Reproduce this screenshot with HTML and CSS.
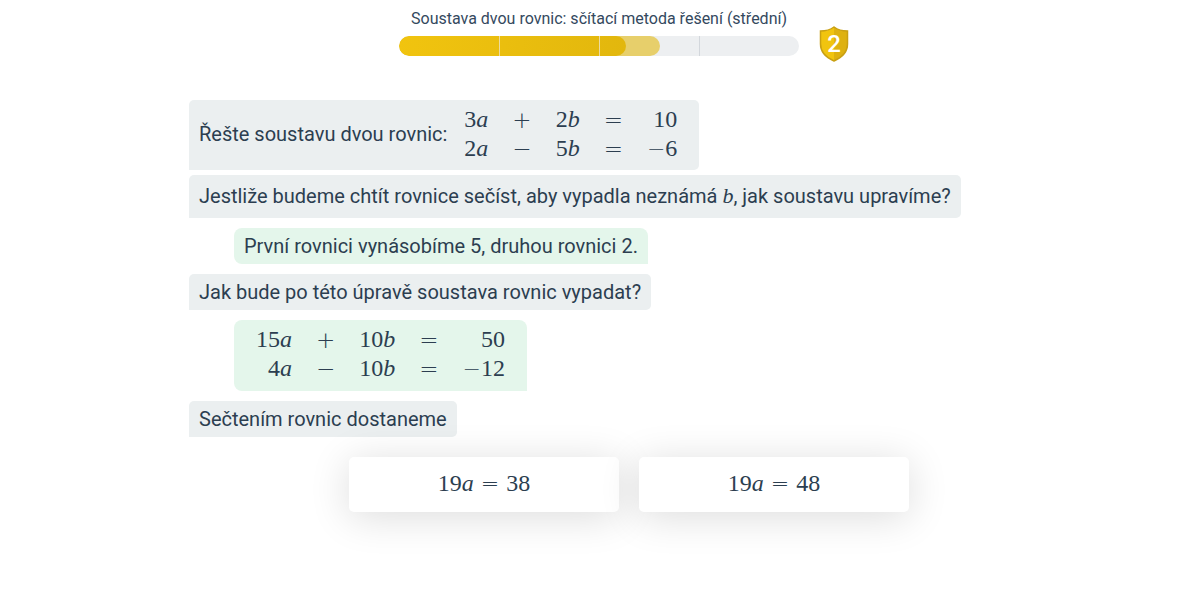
FILE: index.html
```html
<!DOCTYPE html>
<html lang="cs">
<head>
<meta charset="utf-8">
<meta name="viewport" content="width=device-width, initial-scale=1">
<title>Soustava dvou rovnic</title>
<link rel="stylesheet" href="styles.css">
</head>
<body>
<div class="page">
  <header class="header">
    <span class="header-side"></span>
    <div class="header-main">
      <h1 class="title">Soustava dvou rovnic: sčítací metoda řešení (střední)</h1>
      <div class="progress" role="progressbar" aria-valuemin="0" aria-valuemax="100" aria-valuenow="57">
        <span class="bar bar-next" style="width: 65.25%"></span>
        <span class="bar bar-done" style="width: 56.75%"></span>
        <span class="ticks"><i></i><i></i><i></i><i></i></span>
      </div>
    </div>
    <div class="header-side">
      <svg class="shield" viewBox="0 0 30 36" aria-label="Úroveň 2">
        <path d="M15 1C11 4 6 5 1.500 5V18C1.500 27 8 32 15 35C22 32 28.500 27 28.500 18V5C24 5 19 4 15 1Z" fill="#f1c40f"/>
        <path d="M15 1V35C22 32 28.500 27 28.500 18V5C24 5 19 4 15 1Z" fill="#deb110"/>
        <path d="M15 1C11 4 6 5 1.500 5V18C1.500 27 8 32 15 35C22 32 28.500 27 28.500 18V5C24 5 19 4 15 1Z" fill="none" stroke="#c9a013" stroke-width="1.500"/>
        <text x="15" y="26" text-anchor="middle" class="level">2</text>
      </svg>
    </div>
  </header>

  <main class="steps">
    <div class="step question has-system">
      <span>Řešte soustavu dvou rovnic:</span>
      <table class="system">
        <tr><td>3<i>a</i></td><td class="op">+</td><td>2<i>b</i></td><td class="op">=</td><td>10</td></tr>
        <tr><td>2<i>a</i></td><td class="op">−</td><td>5<i>b</i></td><td class="op">=</td><td><span class="sign">−</span>6</td></tr>
      </table>
    </div>
    <p class="step question tall">Jestliže budeme chtít rovnice sečíst, aby vypadla neznámá <span class="math"><i>b</i></span>, jak soustavu upravíme?</p>
    <p class="step answer">První rovnici vynásobíme 5, druhou rovnici 2.</p>
    <p class="step question">Jak bude po této úpravě soustava rovnic vypadat?</p>
    <div class="step answer has-system">
      <table class="system">
        <tr><td>15<i>a</i></td><td class="op">+</td><td>10<i>b</i></td><td class="op">=</td><td>50</td></tr>
        <tr><td>4<i>a</i></td><td class="op">−</td><td>10<i>b</i></td><td class="op">=</td><td><span class="sign">−</span>12</td></tr>
      </table>
    </div>
    <p class="step question">Sečtením rovnic dostaneme</p>
    <div class="choices">
      <button type="button" class="choice">19<i>a</i><span class="sign relation">=</span>38</button>
      <button type="button" class="choice">19<i>a</i><span class="sign relation">=</span>48</button>
    </div>
  </main>
</div>
</body>
</html>
```
FILE: styles.css
```css
* { box-sizing: border-box; }

body {
  min-height: 100vh;
  margin: 0;
  padding: 0 0 50px 18px;
  background: #fff;
  color: #2c3e50;
  font-family: Roboto, sans-serif;
  font-size: 20px;
  line-height: 26px;
}

.page {
  max-width: 820px;
  margin: 0 auto;
}

.header {
  display: flex;
  justify-content: center;
  align-items: flex-end;
  gap: 20px;
  padding-top: 9px;
}

.header-main { flex: 0 1 400px; }

.header-side {
  display: flex;
  flex: 0 0 30px;
}

.title {
  margin: 0 0 7px;
  color: #34495e;
  font-size: 16px;
  font-weight: 400;
  line-height: 20px;
  text-align: center;
}

.progress {
  position: relative;
  height: 20px;
  margin-bottom: 6px;
  overflow: hidden;
  border-radius: 10px;
  background: #edeff1;
}

.bar {
  position: absolute;
  top: 0;
  left: 0;
  height: 100%;
  border-radius: 10px;
}

.bar-next { background: #e7cf6b; }
.bar-done { background: linear-gradient(100deg, #f1c40f, #e2b70d); }

.ticks {
  position: absolute;
  inset: 0;
  display: grid;
  grid-template-columns: repeat(4, 1fr);
}

.ticks i + i { border-left: 1px solid #d3d7dc; }
.ticks i:nth-child(2), .ticks i:nth-child(3) { border-color: #ecdba0; }

.shield {
  width: 30px;
  height: 36px;
}

.level {
  fill: #fff;
  font-family: Roboto, sans-serif;
  font-size: 24px;
  font-weight: 500;
}

.steps {
  display: flex;
  flex-direction: column;
  align-items: flex-start;
  padding-top: 38px;
}

.step {
  margin: 0;
  padding: 5px 10px;
}

.question {
  margin-bottom: 5px;
  border-radius: 5px 5px 5px 0;
  background: #ebeff0;
}

.answer {
  margin: 5px 0 10px 45px;
  border-radius: 8px 8px 0 8px;
  background: #e4f6eb;
}

.tall { padding: 8px 10px 9px; }

.has-system {
  display: flex;
  align-items: center;
  padding-bottom: 7px;
}

.answer.has-system { padding-bottom: 8px; }

.system {
  margin: 0 12px;
  border-collapse: collapse;
}

.question .system { margin-left: 17px; }

.system, .math, .choice {
  font-family: "Liberation Serif", serif;
  font-size: 24px;
  line-height: 29px;
}

.math {
  font-size: 22px;
  line-height: 20px;
}

.system td {
  padding: 0;
  text-align: right;
}

.system .op { padding: 0 24px; }

.op, .sign {
  font-family: "DejaVu Sans", sans-serif;
  font-size: 22px;
  font-weight: 200;
}

.op {
  font-size: 23px;
  line-height: 20px;
}

.sign { line-height: 20px; }
.relation { margin: 0 7px; }

.choices {
  display: flex;
  flex-wrap: wrap;
  align-self: stretch;
  justify-content: center;
  gap: 20px;
  margin: 15px 0 20px 60px;
}

.choice {
  flex: 0 1 270px;
  padding: 12px 10px 14px;
  border: 0;
  border-radius: 5px;
  background: #fff;
  box-shadow: 0 5px 40px rgba(0, 0, 0, 0.14);
  color: #2c3e50;
  cursor: pointer;
}
```
